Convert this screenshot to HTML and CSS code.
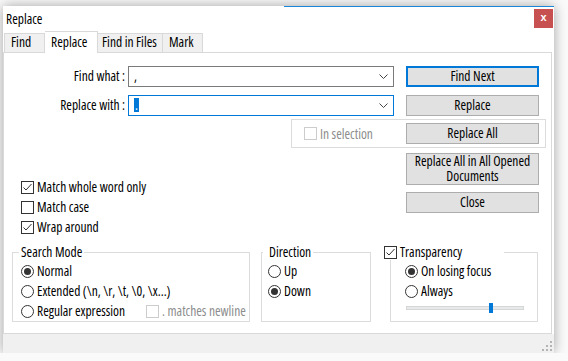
FILE: index.html
```html
<!DOCTYPE html>
<html lang="en">
<head>
    <meta charset="UTF-8">
    <meta name="viewport" content="width=device-width, initial-scale=1.0">
    <title>Replace</title>
    <link rel="stylesheet" href="styles.css">
</head>
<body>
    <div class="window">
        <div class="topline"></div>
        <div class="titlebar">
            <span class="title">Replace</span>
            <div class="close">x</div>
        </div>

        <div class="tabs">
            <div class="tab tab-find">Find</div>
            <div class="tab tab-replace active">Replace</div>
            <div class="tab tab-files">Find in Files</div>
            <div class="tab tab-mark">Mark</div>
        </div>

        <div class="panel">
            <div class="row">
                <div class="field-label">Find what :</div>
                <div class="combo">
                    <span class="combo-text">,</span>
                    <svg class="chevron" width="9" height="5" viewBox="0 0 9 5"><path d="M0.5 0.5 L4.5 4.5 L8.5 0.5" fill="none" stroke="#444" stroke-width="1"/></svg>
                </div>
                <div class="btn btn-default">Find Next</div>
            </div>

            <div class="row row-replace">
                <div class="field-label">Replace with :</div>
                <div class="combo combo-focus">
                    <span class="combo-text"><span class="selected">.</span></span>
                    <svg class="chevron" width="9" height="5" viewBox="0 0 9 5"><path d="M0.5 0.5 L4.5 4.5 L8.5 0.5" fill="none" stroke="#444" stroke-width="1"/></svg>
                </div>
                <div class="btn">Replace</div>
            </div>

            <div class="selection-box">
                <div class="check-item disabled">
                    <span class="checkbox"></span>
                    <span>In selection</span>
                </div>
                <div class="btn">Replace All</div>
            </div>

            <div class="middle">
                <div class="options">
                    <div class="check-item">
                        <span class="checkbox"><svg width="11" height="11" viewBox="0 0 11 11"><path d="M1.5 5.5 L4 8 L9.5 2" fill="none" stroke="#333" stroke-width="1"/></svg></span>
                        <span>Match whole word only</span>
                    </div>
                    <div class="check-item">
                        <span class="checkbox"></span>
                        <span>Match case</span>
                    </div>
                    <div class="check-item">
                        <span class="checkbox"><svg width="11" height="11" viewBox="0 0 11 11"><path d="M1.5 5.5 L4 8 L9.5 2" fill="none" stroke="#333" stroke-width="1"/></svg></span>
                        <span>Wrap around</span>
                    </div>
                </div>
                <div class="side-buttons">
                    <div class="btn btn-tall">Replace All in All Opened<br>Documents</div>
                    <div class="btn">Close</div>
                </div>
            </div>

            <div class="groups">
                <fieldset class="group group-mode">
                    <legend>Search Mode</legend>
                    <div class="radio-item"><span class="radio checked"></span><span>Normal</span></div>
                    <div class="radio-item"><span class="radio"></span><span>Extended (\n, \r, \t, \0, \x...)</span></div>
                    <div class="radio-item">
                        <span class="radio"></span><span class="regex-label">Regular expression</span>
                        <span class="check-item disabled">
                            <span class="checkbox"></span>
                            <span>. matches newline</span>
                        </span>
                    </div>
                </fieldset>

                <fieldset class="group group-direction">
                    <legend>Direction</legend>
                    <div class="radio-item"><span class="radio"></span><span>Up</span></div>
                    <div class="radio-item"><span class="radio checked"></span><span>Down</span></div>
                </fieldset>

                <fieldset class="group group-transparency">
                    <legend>
                        <span class="checkbox"><svg width="11" height="11" viewBox="0 0 11 11"><path d="M1.5 5.5 L4 8 L9.5 2" fill="none" stroke="#333" stroke-width="1"/></svg></span>
                        <span>Transparency</span>
                    </legend>
                    <div class="radio-item"><span class="radio checked"></span><span>On losing focus</span></div>
                    <div class="radio-item"><span class="radio"></span><span>Always</span></div>
                    <div class="slider">
                        <div class="slider-thumb"></div>
                    </div>
                </fieldset>
            </div>
        </div>

        <div class="footer">
            <svg class="grip" width="10" height="10" viewBox="0 0 10 10">
                <rect x="8" y="0" width="2" height="2" fill="#B4B4B4"/>
                <rect x="4" y="4" width="2" height="2" fill="#B4B4B4"/>
                <rect x="8" y="4" width="2" height="2" fill="#B4B4B4"/>
                <rect x="0" y="8" width="2" height="2" fill="#B4B4B4"/>
                <rect x="4" y="8" width="2" height="2" fill="#B4B4B4"/>
                <rect x="8" y="8" width="2" height="2" fill="#B4B4B4"/>
            </svg>
        </div>
    </div>
</body>
</html>
```

FILE: styles.css
```css
body {
    margin: 0;
    background-color: #FAFAFA;
    font-family: 'Open Sans', 'Liberation Sans', sans-serif;
    font-size: 13.5px;
    font-stretch: 85%;
    color: #000;
    overflow: hidden;
    white-space: nowrap;
}

.window {
    margin: 6px 0 0 3px;
    width: 551px;
    height: 347px;
    background-color: #FFFFFF;
    box-shadow: 0 0 12px rgba(0, 0, 0, 0.35);
    display: flex;
    flex-direction: column;
}

.topline {
    height: 1px;
    background: linear-gradient(to right, transparent 281px, #1A86D8 281px);
}

.titlebar {
    height: 24px;
    display: flex;
    align-items: flex-start;
    justify-content: space-between;
}

.title {
    padding-left: 3px;
    line-height: 24px;
}

.close {
    width: 19px;
    height: 19px;
    margin-top: 2px;
    margin-right: 1px;
    background-color: #C75050;
    color: #FFFFFF;
    font-family: 'Liberation Sans', sans-serif;
    font-stretch: 100%;
    font-weight: bold;
    font-size: 11px;
    line-height: 17px;
    text-align: center;
}

/* tabs */

.tabs {
    height: 22px;
    margin-bottom: -1px;
    margin-left: 1px;
    display: flex;
    align-items: flex-end;
}

.tab {
    height: 19px;
    margin-bottom: 1px;
    box-sizing: border-box;
    border: 1px solid #D9D9D9;
    border-bottom: none;
    border-left: none;
    background-color: #F0F0F0;
    padding-left: 6px;
    line-height: 17px;
}

.tab-find {
    width: 41px;
    border-left: 1px solid #D9D9D9;
}

.tab-replace {
    width: 53px;
}

.tab-files {
    width: 65px;
    padding-left: 4px;
}

.tab-mark {
    width: 40px;
}

.tab.active {
    height: 22px;
    margin-bottom: 0;
    background-color: #FFFFFF;
    position: relative;
    z-index: 1;
    line-height: 20px;
}

/* panel */

.panel {
    width: 549px;
    height: 282px;
    box-sizing: border-box;
    border: 1px solid #D9D9D9;
    background-color: #FFFFFF;
}

.row {
    height: 22px;
    margin-top: 12px;
    display: flex;
    align-items: center;
}

.row-replace {
    margin-top: 7px;
}

.field-label {
    width: 121px;
    margin-right: 3px;
    text-align: right;
}

.combo {
    width: 266px;
    height: 21px;
    box-sizing: border-box;
    border: 1px solid #7A7A7A;
    display: flex;
    align-items: center;
    justify-content: space-between;
    padding: 0 5px 0 5px;
}

.combo-focus {
    border-color: #0078D7;
}

.selected {
    background-color: #0078D7;
    color: #FFFFFF;
    padding: 0 1px;
    line-height: 14px;
    display: inline-block;
}

.btn {
    width: 133px;
    height: 21px;
    margin-left: 12px;
    box-sizing: border-box;
    border: 1px solid #ADADAD;
    background-color: #E1E1E1;
    display: flex;
    align-items: center;
    justify-content: center;
    text-align: center;
    line-height: 15px;
}

.btn-default {
    border: 2px solid #0078D7;
}

.btn-tall {
    height: 32px;
    line-height: 15px;
}

.selection-box {
    margin: 3px 0 0 287px;
    width: 255px;
    height: 29px;
    box-sizing: border-box;
    border: 1px solid #DCDCDC;
    padding: 0 6px 0 12px;
    display: flex;
    align-items: center;
    justify-content: space-between;
}

/* checkboxes and radios */

.check-item {
    display: flex;
    align-items: center;
    gap: 3px;
}

.checkbox {
    width: 13px;
    height: 13px;
    box-sizing: border-box;
    border: 1px solid #333333;
    background-color: #FFFFFF;
    display: inline-flex;
    align-items: center;
    justify-content: center;
    flex-shrink: 0;
}

.disabled {
    color: #8D8D8D;
}

.disabled .checkbox {
    border-color: #CCCCCC;
}

.middle {
    margin-top: 5px;
    display: flex;
    height: 84px;
}

.options {
    margin-left: 17px;
    padding-top: 24px;
}

.options .check-item {
    height: 20px;
}

.side-buttons {
    margin-left: auto;
    margin-right: 12px;
    display: flex;
    flex-direction: column;
    gap: 7px;
}

.groups {
    margin-top: 8px;
    display: flex;
}

.group {
    margin: 0;
    padding: 1px 0 0 0;
    height: 77px;
    box-sizing: border-box;
    border: 1px solid #DCDCDC;
    min-inline-size: 0;
}

.group legend {
    line-height: 15px;
    padding: 0 2px;
}

.group-mode {
    margin-left: 8px;
    width: 238px;
    padding-left: 8px;
}

.group-mode legend {
    margin-left: -2px;
}

.group-direction {
    margin-left: 11px;
    width: 110px;
    padding-left: 6px;
}

.group-direction legend {
    margin-left: -5px;
    padding: 0 2px 0 6px;
}

.group-transparency {
    margin-left: 19px;
    width: 148px;
    padding-left: 14px;
}

.group-transparency legend {
    margin-left: -21px;
    width: 120px;
    box-sizing: border-box;
    padding: 0;
    display: flex;
    align-items: center;
    gap: 3px;
}

.radio-item {
    height: 20px;
    display: flex;
    align-items: center;
    gap: 3px;
}

.radio {
    width: 13px;
    height: 13px;
    box-sizing: border-box;
    border: 1px solid #333333;
    border-radius: 50%;
    background-color: #FFFFFF;
    display: inline-flex;
    align-items: center;
    justify-content: center;
    flex-shrink: 0;
}

.radio.checked::after {
    content: "";
    width: 7px;
    height: 7px;
    border-radius: 50%;
    background-color: #333333;
}

.regex-label {
    width: 106px;
}

.slider {
    margin: 5px 0 0 1px;
    width: 118px;
    height: 4px;
    box-sizing: border-box;
    border: 1px solid #D6D6D6;
    background-color: #E7EAEA;
    display: flex;
    align-items: center;
}

.slider-thumb {
    margin-left: 82px;
    width: 4px;
    height: 10px;
    flex-shrink: 0;
    background-color: #0078D7;
}

.footer {
    flex: 1;
    width: 551px;
    background-color: #F0F0F0;
    display: flex;
    align-items: flex-end;
    justify-content: flex-end;
}

.grip {
    margin: 0 2px 2px 0;
}
```
